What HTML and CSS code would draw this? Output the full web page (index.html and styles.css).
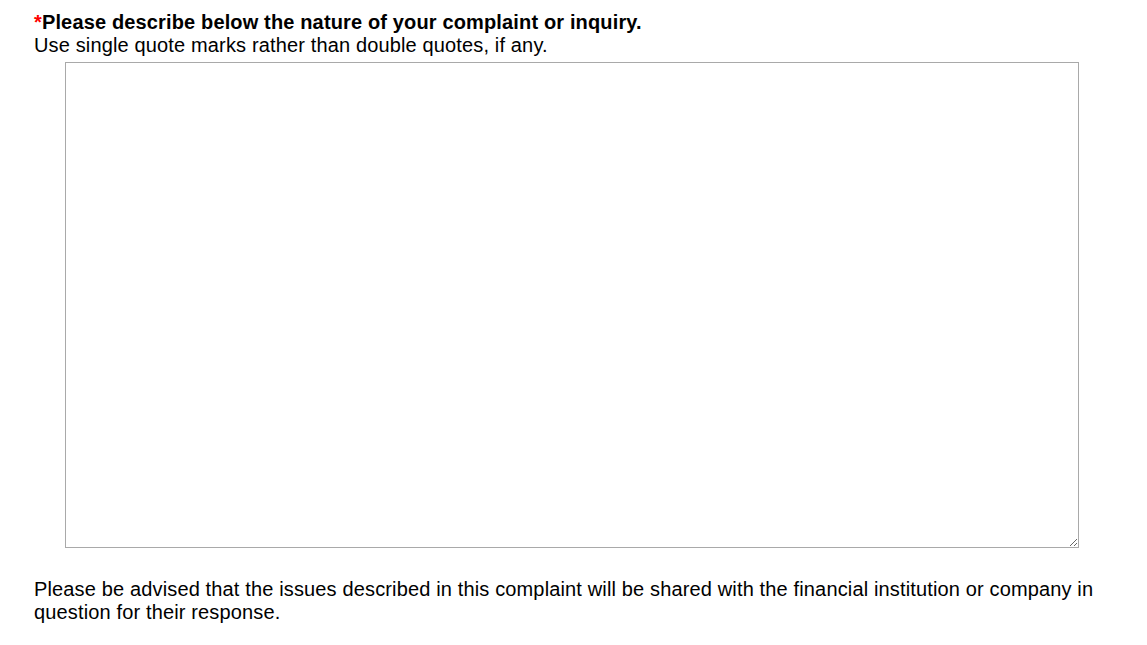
FILE: index.html
```html
<!DOCTYPE html>
<html>
<head>
<meta charset="utf-8">
<link rel="stylesheet" href="styles.css">
</head>
<body>
<div class="form">
  <div class="label"><span class="req">*</span>Please describe below the nature of your complaint or inquiry.</div>
  <div class="hint">Use single quote marks rather than double quotes, if any.</div>
  <div class="field"><textarea class="box"></textarea></div>
  <p class="note">Please be advised that the issues described in this complaint will be shared with the financial institution or company in question for their response.</p>
</div>
</body>
</html>
```
FILE: styles.css
```css
html, body { margin: 0; padding: 0; background: #fff; }
body { font-family: "Liberation Sans", Arial, sans-serif; font-size: 20px; color: #000; letter-spacing: 0.145px; }
.form { padding: 11px 34px 0 34px; }
.label { font-weight: bold; line-height: 23px; }
.req { color: #f00; }
.hint { line-height: 23px; }
.field { padding-left: 31px; }
.box { display: block; box-sizing: border-box; width: 1014px; height: 486px; margin: 5px 0 0 0; border: 1px solid #a9a9a9; resize: both; padding: 2px; font-family: inherit; }
.note { margin: 30px 0 0 0; line-height: 23px; }
```
